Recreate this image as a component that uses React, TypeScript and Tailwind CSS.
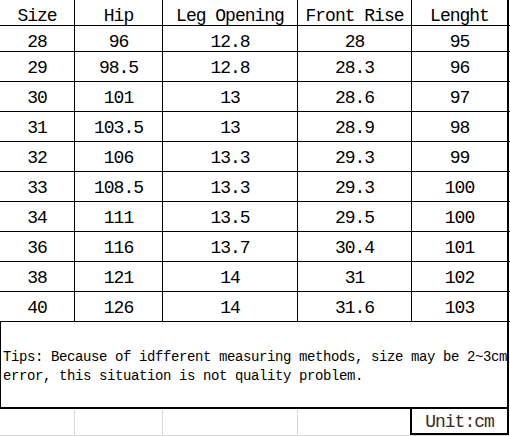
import React from "react";

const rows: string[][] = [
  ["28", "96", "12.8", "28", "95"],
  ["29", "98.5", "12.8", "28.3", "96"],
  ["30", "101", "13", "28.6", "97"],
  ["31", "103.5", "13", "28.9", "98"],
  ["32", "106", "13.3", "29.3", "99"],
  ["33", "108.5", "13.3", "29.3", "100"],
  ["34", "111", "13.5", "29.5", "100"],
  ["36", "116", "13.7", "30.4", "101"],
  ["38", "121", "14", "31", "102"],
  ["40", "126", "14", "31.6", "103"],
];

const header = ["Size", "Hip", "Leg Opening", "Front Rise", "Lenght"];

const font = { fontFamily: '"Liberation Mono", "Noto Sans CJK SC", monospace' };

function Row({ cells, h }: { cells: string[]; h: string }) {
  return (
    <div className={`grid grid-cols-[75px_88px_135px_114px_97px] border-b border-black ${h}`}>
      {cells.map((c, i) => (
        <div
          key={i}
          className={`flex items-center justify-center pt-[3px] text-[18px] tracking-[-1px] text-black ${
            i < 4 ? "border-r border-black" : "border-r-2 border-black"
          }`}
        >
          {c}
        </div>
      ))}
    </div>
  );
}

export default function App() {
  return (
    <div className="w-[510px] h-[436px] bg-white overflow-hidden" style={font}>
      <Row cells={header} h="h-[26px]" />
      {rows.map((r, i) => (
        <Row key={i} cells={r} h={i === 0 ? "h-[26px]" : "h-[30px]"} />
      ))}
      <div className="w-[509px] h-[87px] border-l border-r-2 border-b-2 border-black flex items-center pl-[2px] pt-[4px]">
        <p className="text-[14px] tracking-[-0.4px] leading-[19px] text-black whitespace-pre">
          {"Tips: Because of idfferent measuring methods, size may be 2~3cm\nerror, this situation is not quality problem."}
        </p>
      </div>
      <div className="flex h-[27px] border-b border-[#d9d9d9]">
        <div className="w-[75px] border-r border-[#d9d9d9]" />
        <div className="w-[88px] border-r border-[#d9d9d9]" />
        <div className="w-[135px] border-r border-[#d9d9d9]" />
        <div className="w-[112px]" />
        <div className="w-[99px] h-[26px] border-l-2 border-r-2 border-b-2 border-black flex items-center justify-center pt-[2px] text-[18px] tracking-[-1px] text-[#3d2b1a]">
          Unit:cm
        </div>
      </div>
    </div>
  );
}
